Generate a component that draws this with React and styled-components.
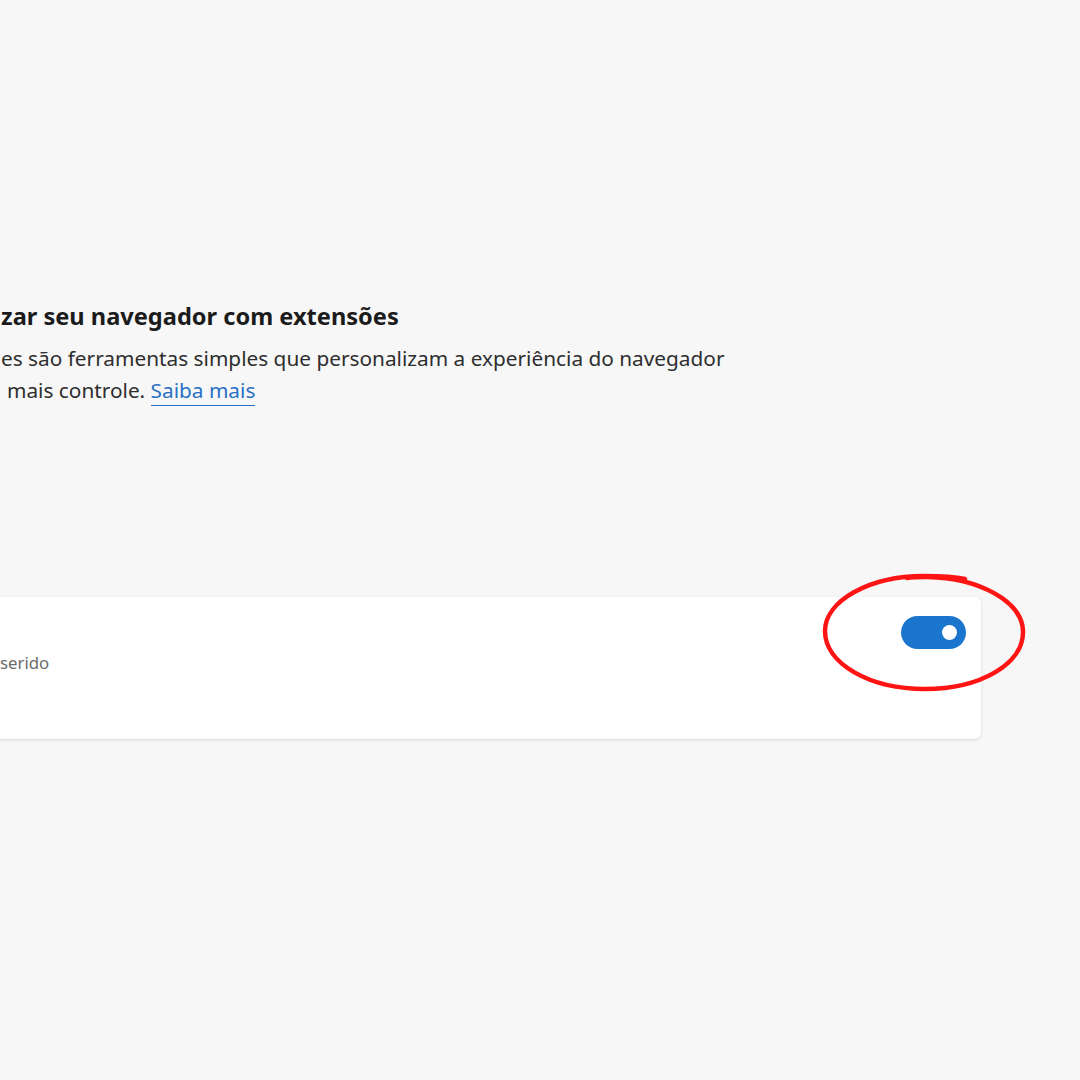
import styled, { createGlobalStyle } from "styled-components";

const Global = createGlobalStyle`
  html, body {
    margin: 0;
    padding: 0;
    background: #f7f7f7;
  }
  body {
    font-family: "Noto Sans", "Open Sans", sans-serif;
  }
`;

const Page = styled.div`
  width: 1080px;
  height: 1080px;
  overflow: hidden;
  position: relative;
  background: #f7f7f7;
  padding-top: 300px;
  box-sizing: border-box;
`;

const Intro = styled.section`
  display: flex;
  flex-direction: column;
  padding-left: 1px;
`;

const Heading = styled.h2`
  margin: 0 0 10px;
  font-size: 23.6px;
  line-height: 32px;
  font-weight: 700;
  color: #1b1b1b;
  white-space: nowrap;
`;

const Body = styled.p`
  margin: 0;
  font-size: 20.8px;
  line-height: 32px;
  color: #2e2e2e;
  white-space: nowrap;
  padding-left: ${(p) => p.indent || 0}px;
`;

const Link = styled.a`
  color: #2a70c4;
  text-decoration: none;
  border-bottom: 1.5px solid #2a70c4;
  padding-bottom: 1px;
`;

const Card = styled.div`
  margin-top: 191px;
  margin-left: -12px;
  width: 993px;
  height: 142px;
  background: #ffffff;
  border-radius: 6px;
  box-shadow: 0 1px 3px rgba(0, 0, 0, 0.14);
  display: flex;
  justify-content: space-between;
  align-items: flex-start;
  box-sizing: border-box;
  padding: 19px 15px 0 12px;
`;

const Texts = styled.div`
  display: flex;
  flex-direction: column;
  padding-top: 36px;
`;

const Sub = styled.span`
  font-size: 16.8px;
  line-height: 22px;
  color: #6b6b6b;
`;

const Toggle = styled.div`
  width: 65px;
  height: 33px;
  border-radius: 17px;
  background: #1a76cc;
  display: flex;
  align-items: center;
  justify-content: flex-end;
  padding-right: 9px;
  box-sizing: border-box;
`;

const Knob = styled.span`
  width: 15px;
  height: 15px;
  border-radius: 50%;
  background: #ffffff;
`;

// hand-drawn red ring around the switch
const Circle = styled.svg`
  position: absolute;
  left: 815px;
  top: 568px;
  pointer-events: none;
`;

export default function App() {
  return (
    <Page>
      <Global />
      <Intro>
        <Heading>zar seu navegador com extensões</Heading>
        <Body>es são ferramentas simples que personalizam a experiência do navegador</Body>
        <Body indent={6}>
          mais controle. <Link href="#">Saiba mais</Link>
        </Body>
      </Intro>
      <Card>
        <Texts>
          <Sub>serido</Sub>
        </Texts>
        <Toggle>
          <Knob />
        </Toggle>
      </Card>
      <Circle width="220" height="130" viewBox="0 0 220 130">
        <path
          d="M150 11 C 136 8, 122 8, 109 8 C 54 8, 10 33, 10 63 C 10 96, 55 121, 110 121 C 165 121, 209 96, 208 63 C 207 33, 164 10, 112 9 C 104 9, 98 9, 92 10"
          fill="none"
          stroke="#ff1414"
          strokeWidth="4.5"
          strokeLinecap="round"
        />
        <path
          d="M104 10 C 125 9, 145 11, 156 14"
          fill="none"
          stroke="#ff1414"
          strokeWidth="1.5"
          strokeLinecap="round"
        />
      </Circle>
    </Page>
  );
}
